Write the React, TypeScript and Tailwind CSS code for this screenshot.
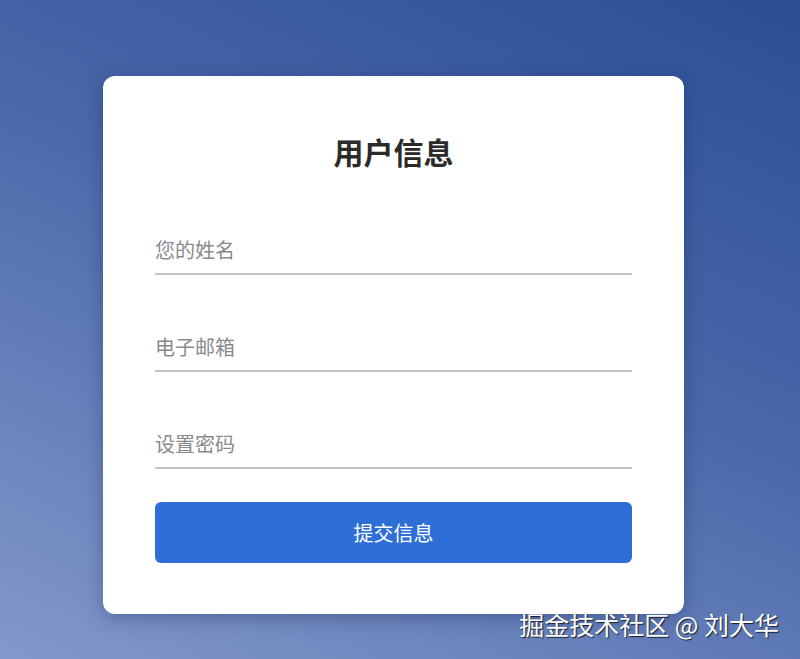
import React from 'react';

const font = "font-['Noto_Sans_CJK_SC','Noto_Sans',sans-serif]";

const fields = [
  { name: 'name', type: 'text', placeholder: '您的姓名' },
  { name: 'email', type: 'email', placeholder: '电子邮箱' },
  { name: 'password', type: 'password', placeholder: '设置密码' },
];

function UnderlineInput({ type, placeholder }: { type: string; placeholder: string }) {
  return (
    <input
      type={type}
      placeholder={placeholder}
      className={`${font} block w-full h-[50px] text-[20px] text-gray-800 bg-transparent border-0 border-b-2 border-[#c4c4c8] outline-none placeholder:text-[#8a8a8e] focus:border-[#2d6fd6]`}
    />
  );
}

export default function App() {
  return (
    <div className={`${font} relative min-h-[659px] w-full overflow-hidden bg-[linear-gradient(205deg,#2b4e93_0%,#4a68aa_45%,#8299cb_100%)]`}>
      <div className="pt-[76px] pl-[103px]">
        <form
          onSubmit={e => e.preventDefault()}
          className="w-[581px] h-[538px] bg-white rounded-[12px] shadow-[0_4px_18px_rgba(20,35,80,0.35)] px-[52px] pt-[57px] flex flex-col"
        >
          <h1 className="text-center text-[30px] leading-[36px] font-bold text-[#2b2b2b] mb-[56px]">用户信息</h1>
          <div className="flex flex-col gap-[47px]">
            {fields.map(f => (
              <UnderlineInput key={f.name} type={f.type} placeholder={f.placeholder} />
            ))}
          </div>
          <button
            type="submit"
            className="mt-[33px] h-[61px] w-full rounded-[6px] bg-[#2d6fd6] text-white text-[20px]"
          >
            提交信息
          </button>
        </form>
      </div>
      <div className="absolute right-[21px] top-[607px] text-white text-[25px] leading-[34px] [text-shadow:1px_1px_1px_rgba(0,0,0,0.75)]">
        掘金技术社区 @ 刘大华
      </div>
    </div>
  );
}
